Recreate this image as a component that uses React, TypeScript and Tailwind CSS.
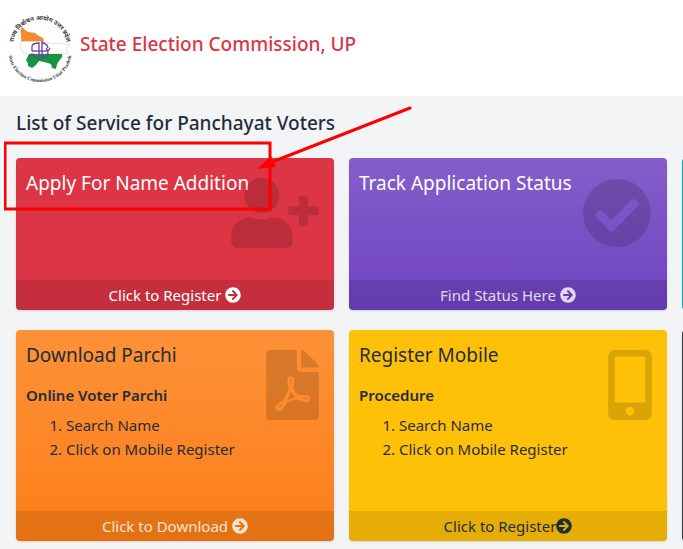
import type { ReactNode } from 'react';
import clsx from 'clsx';
import {
  FaArrowCircleRight,
  FaCheckCircle,
  FaFilePdf,
  FaMobileAlt,
  FaUserPlus,
} from 'react-icons/fa';

function Logo() {
  return (
    <svg viewBox="0 0 68 72" className="h-[72px] w-[68px] shrink-0" role="img" aria-label="State Election Commission">
      <defs>
        <path id="ring-top" d="M5 38 V35 A27 27 0 0 1 59 35 V38" />
        <path id="ring-bottom" d="M0.500 37 V40 A31.500 30 0 0 0 63.500 40 V37" />
      </defs>
      <path
        d="M13 16 C14 14.500 15 15 16 17 L20 20 L27 21 L31 24 L35 26 L36 29.500 L13 29.500 C14 26 12.500 22 12.500 19Z"
        fill="#f58a2c"
      />
      <path
        d="M13 29.500 L36 29.500 L44 32 L52 31 L62 33 L58 37 L60 42 L16 42 L13 36Z"
        fill="#fff"
        stroke="#d0d0d4"
        strokeWidth="0.600"
      />
      <path
        d="M21 42 L54 42 L54 45 L51 49 L49 52 L48 57 L44 56 L43 52 L36 50 L31 49 L28 53 L24 56 L20 54 L20 51 L18 48Z"
        fill="#15963f"
      />
      <g fill="none" stroke="#6b3fa0" strokeWidth="1.300">
        <path d="M24 39 V34 Q25 31 31 31 V46 Q27 46 25 43" />
        <path d="M34 29 V46 Q40 46 40 40" />
        <path d="M34 31 Q39 31 40 36" />
        <path d="M24 39 H40" />
        <path d="M22 45 L24 42 L27 44 M38 36 L40 39 L42 36" />
      </g>
      <text fill="#333" fontSize="6" fontWeight="700" fontFamily="'Noto Sans', 'Noto Sans Devanagari', sans-serif">
        <textPath href="#ring-top" startOffset="50%" textAnchor="middle">
          राज्य निर्वाचन आयोग उत्तर प्रदेश
        </textPath>
      </text>
      <text fill="#333" fontSize="5" fontWeight="700" fontFamily="'Liberation Serif', serif">
        <textPath href="#ring-bottom" startOffset="50%" textAnchor="middle">
          State Election Commission Uttar Pradesh
        </textPath>
      </text>
    </svg>
  );
}

type ServiceCardProps = {
  title: string;
  color: string;
  icon: ReactNode;
  linkText: string;
  linkClass: string;
  subtitle?: string;
  steps?: string[];
};

function ServiceCard({ title, color, icon, linkText, linkClass, subtitle, steps }: ServiceCardProps) {
  return (
    <article className={clsx('relative flex flex-col rounded shadow', color)}>
      <div className="min-h-[122px] flex-1 p-[10px]">
        <h3 className="text-[19px] leading-[30px]">{title}</h3>
        {subtitle && <p className="mt-[13px] text-[15px] leading-6 font-semibold">{subtitle}</p>}
        {steps && (
          <ol className="mt-[6px] mb-10 list-decimal pl-10 text-[15px] leading-6">
            {steps.map((step) => (
              <li key={step}>{step}</li>
            ))}
          </ol>
        )}
      </div>
      <div className="absolute top-5 right-[15px] text-black/15">{icon}</div>
      <a
        href="#"
        className={clsx(
          'flex items-center justify-center rounded-b bg-black/10 py-[3px] text-[15px] leading-6',
          linkClass,
        )}
      >
        {linkText}
        <FaArrowCircleRight className="size-4" />
      </a>
    </article>
  );
}

export default function App() {
  const steps = ['Search Name', 'Click on Mobile Register'];

  return (
    <div className="relative min-h-screen overflow-hidden bg-[#f3f4f6] font-['Noto_Sans',sans-serif] text-[#1f2d3d]">
      <header className="flex items-start gap-1 bg-white px-2 pt-3 pb-3">
        <Logo />
        <h1 className="mt-[17px] text-[19px] leading-[30px] font-medium text-[#dc3545]">
          State Election Commission, UP
        </h1>
      </header>

      <main className="px-4 pt-3 pb-2">
        <h2 className="text-[19px] leading-[30px] font-medium">List of Service for Panchayat Voters</h2>

        <div className="mt-5 grid grid-cols-[repeat(3,calc((100%-15px)/2))] gap-x-[15px] gap-y-5">
          <ServiceCard
            title="Apply For Name Addition"
            color="bg-[#dc3545] text-white"
            icon={<FaUserPlus className="h-[70px] w-[88px]" />}
            linkText="Click to Register"
            linkClass="gap-1 text-white"
          />
          <ServiceCard
            title="Track Application Status"
            color="bg-linear-to-b from-[#855eca] to-[#6f42c1] text-white"
            icon={<FaCheckCircle className="h-[70px] w-[70px]" />}
            linkText="Find Status Here"
            linkClass="gap-1 text-white/80"
          />
          <div className="rounded bg-[#17a2b8] shadow" />
          <ServiceCard
            title="Download Parchi"
            color="bg-linear-to-b from-[#fd9137] to-[#fd7e14]"
            icon={<FaFilePdf className="h-[70px] w-[53px]" />}
            linkText="Click to Download"
            linkClass="gap-1 text-white/80"
            subtitle="Online Voter Parchi"
            steps={steps}
          />
          <ServiceCard
            title="Register Mobile"
            color="bg-[#ffc107]"
            icon={<FaMobileAlt className="h-[70px] w-11" />}
            linkText="Click to Register"
            linkClass=""
            subtitle="Procedure"
            steps={steps}
          />
          <div className="rounded bg-[#343a40] shadow" />
        </div>
      </main>

      {/* callout around the first service */}
      <svg
        viewBox="0 0 410 110"
        className="pointer-events-none absolute top-[104px] left-1 h-[110px] w-[410px]"
        fill="none"
        stroke="#f00"
        aria-hidden="true"
      >
        <rect x="1" y="39" width="265" height="66" strokeWidth="3" />
        <path d="M406 4 L268 58" strokeWidth="3" strokeLinecap="round" />
        <path d="M253 65 L267 52 L272 63Z" fill="#f00" stroke="none" />
      </svg>
    </div>
  );
}
